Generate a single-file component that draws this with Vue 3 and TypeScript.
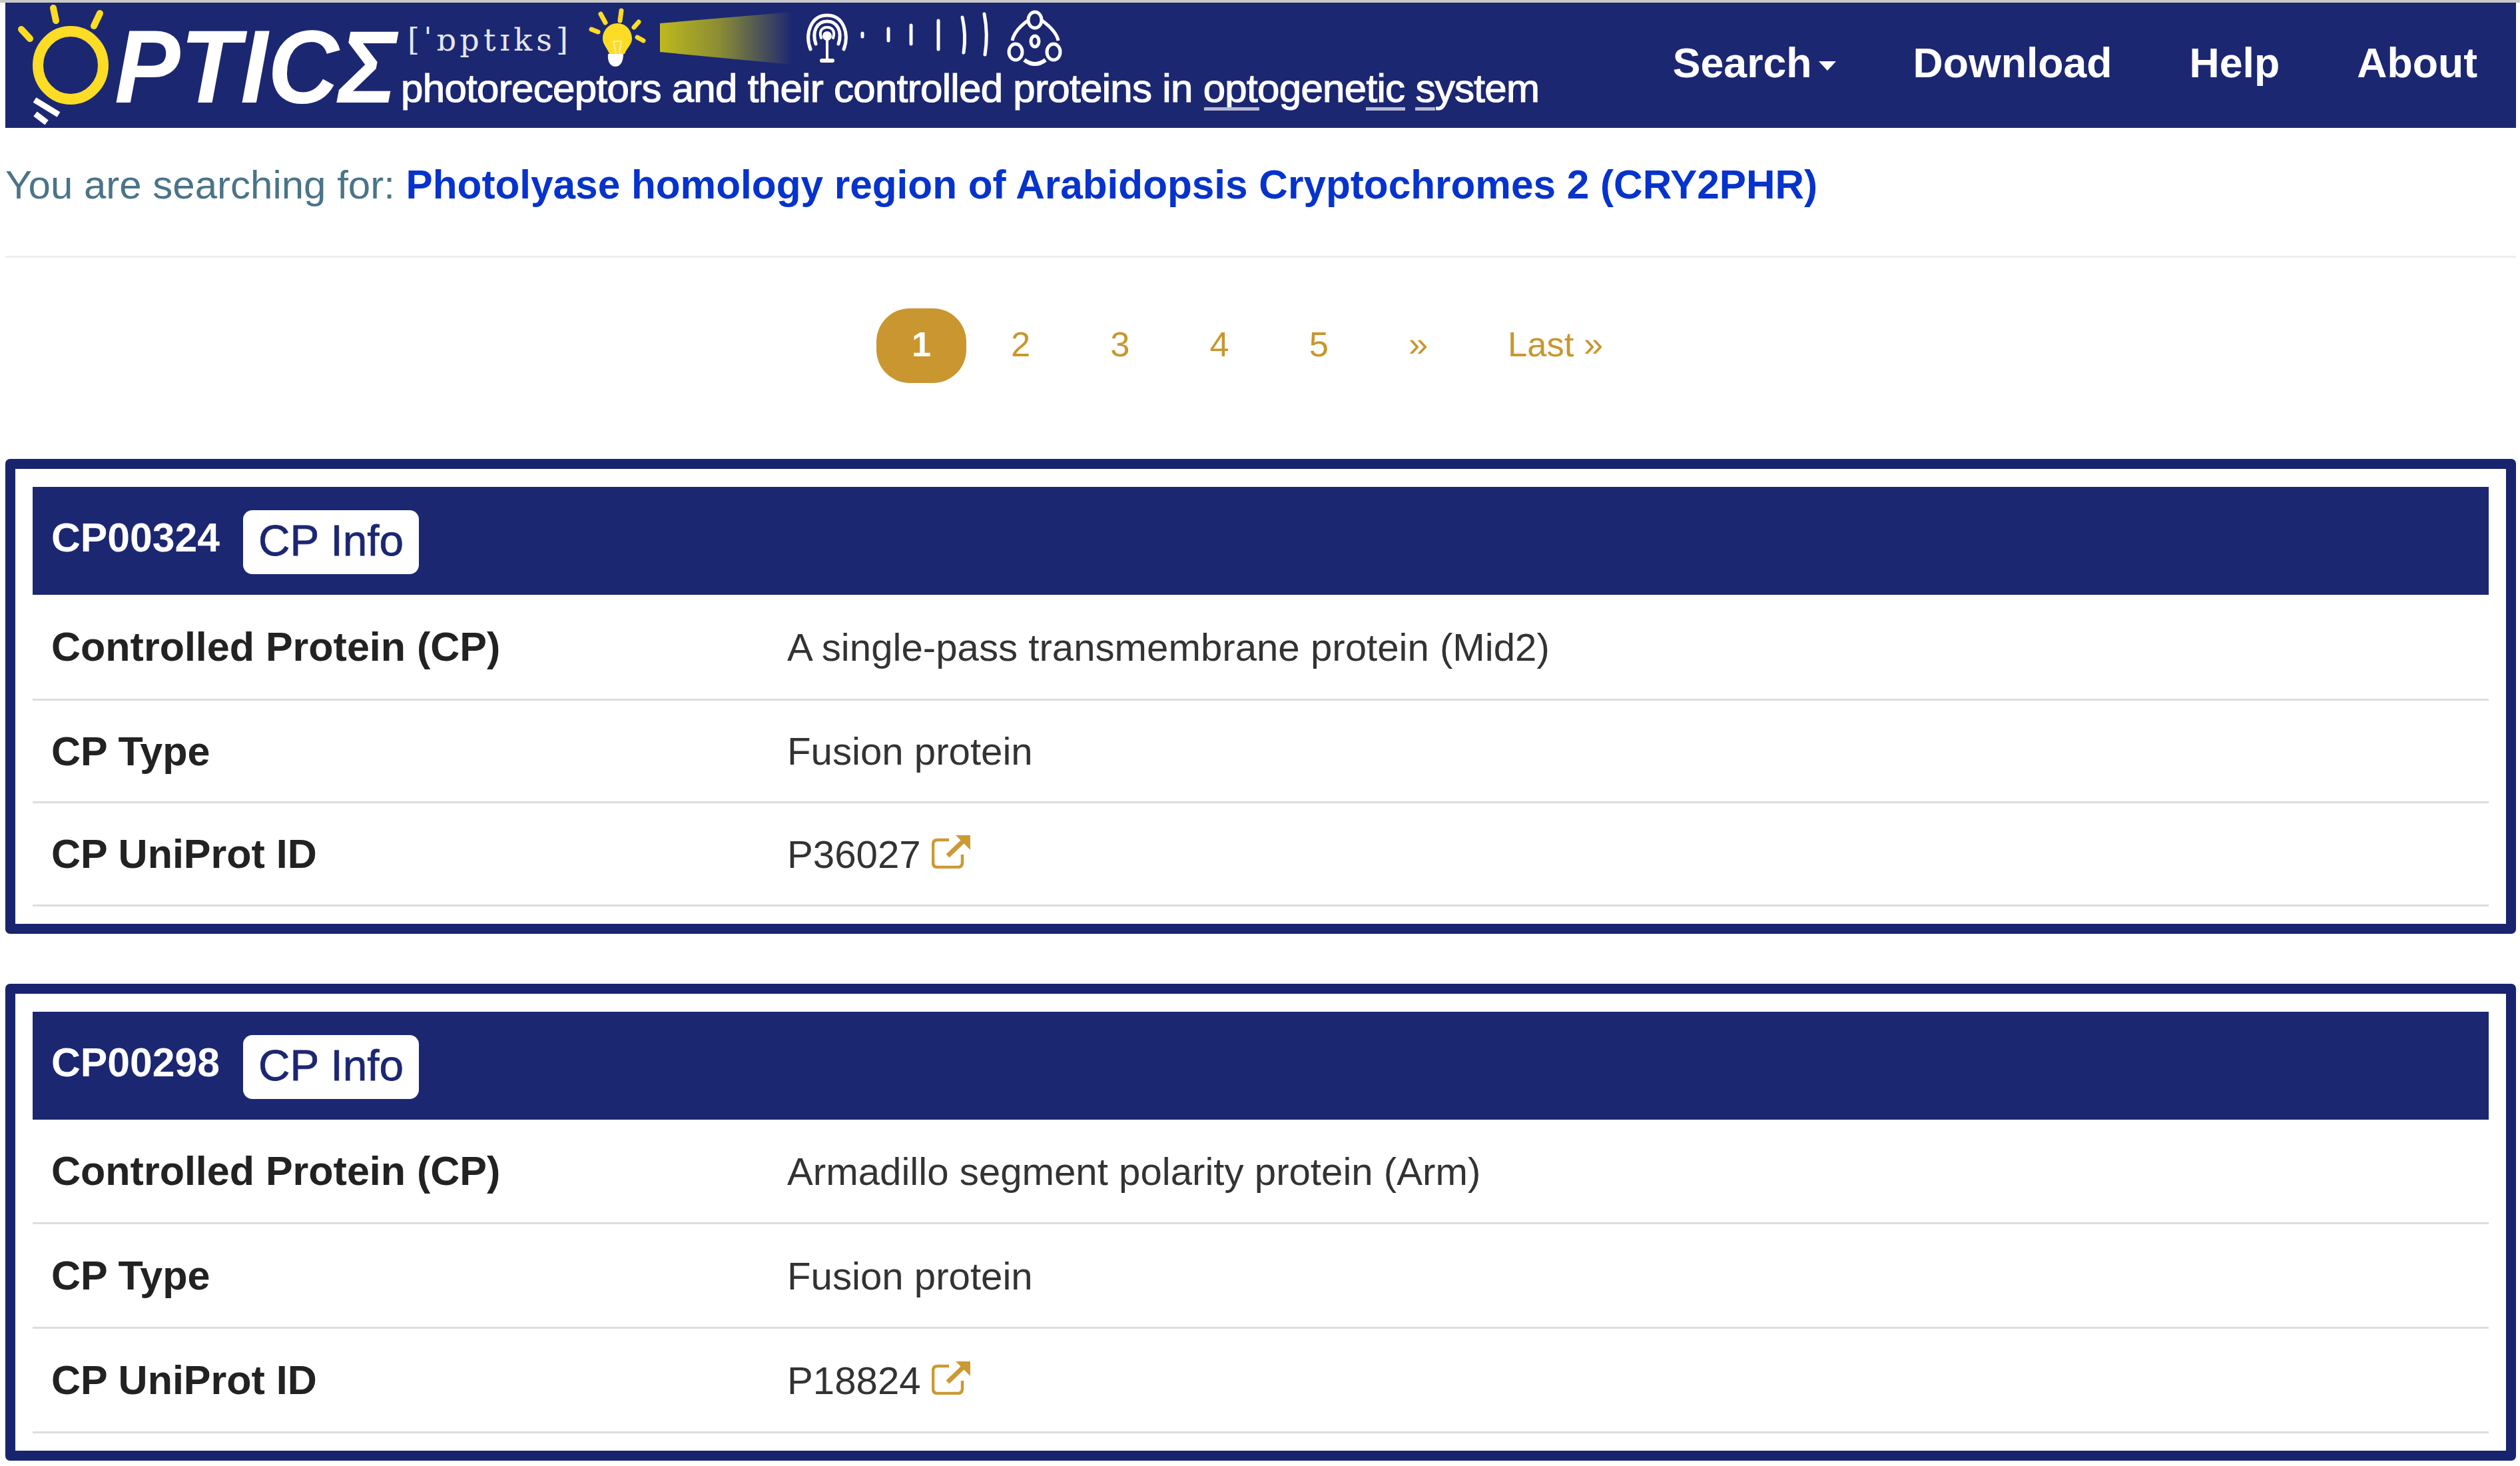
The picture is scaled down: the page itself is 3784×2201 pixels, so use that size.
<script setup lang="ts">
  interface Row {
    label: string
    value: string
    height: number
    link?: boolean
  }

  interface Card {
    id: string
    height: number
    rows: Row[]
  }

  const navItems = ['Download', 'Help', 'About']
  const pages = ['2', '3', '4', '5', '»', 'Last »']

  const cards: Card[] = [
    {
      id: 'CP00324',
      height: 713,
      rows: [
        { label: 'Controlled Protein (CP)', value: 'A single-pass transmembrane protein (Mid2)', height: 159 },
        { label: 'CP Type', value: 'Fusion protein', height: 154 },
        { label: 'CP UniProt ID', value: 'P36027', height: 155, link: true }
      ]
    },
    {
      id: 'CP00298',
      height: 716,
      rows: [
        { label: 'Controlled Protein (CP)', value: 'Armadillo segment polarity protein (Arm)', height: 157 },
        { label: 'CP Type', value: 'Fusion protein', height: 157 },
        { label: 'CP UniProt ID', value: 'P18824', height: 157, link: true }
      ]
    }
  ]
</script>

<template>
  <div class="page">
    <nav class="navbar">
      <svg class="logo" width="2340" height="188" viewBox="8 4 2340 188" role="img" aria-label="OPTICS logo">
        <defs>
          <linearGradient id="beam" x1="0" y1="0" x2="1" y2="0">
            <stop offset="0" stop-color="#bdb91c" />
            <stop offset="0.45" stop-color="#8b8c34" />
            <stop offset="1" stop-color="#1c2772" />
          </linearGradient>
        </defs>

        <!-- sun ring -->
        <ellipse cx="106" cy="98" rx="49" ry="51" fill="none" stroke="#fddc25" stroke-width="16" />
        <g stroke="#fddc25" stroke-width="10" stroke-linecap="round" fill="none">
          <path d="M80 12 L84 31" />
          <path d="M150 20 L141 39" />
          <path d="M32 44 L45 58" />
        </g>
        <g stroke="#fff" stroke-width="9" fill="none">
          <path d="M52 150 L88 172" />
          <path d="M53 171 L70 184" />
        </g>

        <text class="logo-word" x="172" y="154" textLength="424" lengthAdjust="spacingAndGlyphs">PTICΣ</text>
        <text class="logo-ipa" x="612" y="76" textLength="241">[ˈɒptɪks]</text>

        <!-- bulb -->
        <g stroke="#fddc25" stroke-width="7" stroke-linecap="round" fill="none">
          <path d="M902 21 L909 34" />
          <path d="M933 16 L931 31" />
          <path d="M959 33 L952 41" />
          <path d="M888 44 L898 48" />
          <path d="M957 56 L966 61" />
        </g>
        <path d="M927 35 C941 35 949 47 949 58 C949 67 941 72 938 81 L915 81 C912 72 905 67 905 58 C905 47 913 35 927 35 Z" fill="#fddc25" />
        <path d="M921 62 L925 80 M933 62 L930 80 M921 62 L933 62" stroke="#f6edb0" stroke-width="2" fill="none" />
        <path d="M913 81 L936 81 C936 90 933 100 924 100 C915 100 912 90 913 81 Z" fill="#fff" />

        <!-- light beam -->
        <polygon points="991,35 1190,18 1190,97 991,78" fill="url(#beam)" />

        <!-- antenna -->
        <g stroke="#fff" fill="none" stroke-linecap="round">
          <path d="M1217 74 C1208 50 1218 23 1242 23 C1266 23 1276 50 1267 74" stroke-width="5" />
          <path d="M1225 66 C1219 48 1226 32 1242 32 C1258 32 1265 48 1259 66" stroke-width="5" />
          <path d="M1233 57 C1230 48 1233 41 1242 41 C1251 41 1254 48 1251 57" stroke-width="4" />
          <path d="M1242 55 L1242 90" stroke-width="4" />
          <path d="M1234 91 L1250 91" stroke-width="6" />
          <path d="M1295 50 L1295 55" stroke-width="5" />
          <path d="M1334 43 L1334 61" stroke-width="5" />
          <path d="M1368 38 L1368 66" stroke-width="5" />
          <path d="M1409 31 L1409 74" stroke-width="5" />
          <path d="M1445 26 Q1451 52 1447 79" stroke-width="5" />
          <path d="M1478 21 Q1484 52 1479 82" stroke-width="5" />
        </g>
        <circle cx="1242" cy="54" r="7" fill="#fff" />

        <!-- molecule -->
        <g stroke="#fff" fill="none" stroke-width="5">
          <ellipse cx="1554" cy="30" rx="10" ry="12" />
          <ellipse cx="1525" cy="78" rx="10" ry="12" />
          <ellipse cx="1582" cy="78" rx="10" ry="12" />
          <ellipse cx="1554" cy="62" rx="6" ry="8" />
          <path d="M1543 31 C1531 40 1522 50 1520 61" />
          <path d="M1565 31 C1577 40 1587 50 1589 61" />
          <path d="M1538 90 Q1554 102 1570 90" stroke-width="6" />
        </g>

        <text class="logo-tag" x="602" y="153" textLength="1710">photoreceptors and their controlled proteins in optogenetic system</text>
        <g fill="#b5b9d4">
          <rect x="1808" y="161" width="83" height="5" />
          <rect x="2051" y="161" width="59" height="5" />
          <rect x="2125" y="161" width="30" height="5" />
        </g>
      </svg>

      <ul class="nav-links">
        <li class="nav-link">Search<span class="caret"></span></li>
        <li v-for="item in navItems" :key="item" class="nav-link">{{ item }}</li>
      </ul>
    </nav>

    <p class="search-line">
      You are searching for:
      <b>Photolyase homology region of Arabidopsis Cryptochromes 2 (CRY2PHR)</b>
    </p>
    <hr class="divider" />

    <ul class="pagination">
      <li class="page-item active">1</li>
      <li v-for="p in pages" :key="p" class="page-item">{{ p }}</li>
    </ul>

    <section v-for="card in cards" :key="card.id" class="card" :style="{ height: card.height + 'px' }">
      <header class="card-head">
        <span class="card-id">{{ card.id }}</span>
        <span class="info-pill">CP Info</span>
      </header>
      <div v-for="row in card.rows" :key="row.label" class="row" :style="{ height: row.height + 'px' }">
        <span class="row-label">{{ row.label }}</span>
        <span class="row-value">
          {{ row.value }}
          <svg v-if="row.link" class="ext-icon" width="60" height="50" viewBox="0 0 60 50">
            <path d="M26 7 L9 7 Q2 7 2 14 L2 41 Q2 48 9 48 L39 48 Q46 48 46 41 L46 29" fill="none" stroke="#cc9a33" stroke-width="4.5" />
            <path d="M24 31 L47 9" fill="none" stroke="#cc9a33" stroke-width="7" />
            <path d="M36 0 L58 0 L58 22 Z" fill="#cc9a33" />
          </svg>
        </span>
      </div>
    </section>
  </div>
</template>

<style>
  html, body {
    margin: 0;
    background: #fff;
  }
</style>

<style scoped>
  .page {
    width: 3784px;
    height: 2201px;
    overflow: hidden;
    box-sizing: border-box;
    padding: 4px 6px 0 8px;
    font-family: "Liberation Sans", Arial, sans-serif;
    color: #333;
    background: linear-gradient(#c8c8c8 4px, #fff 4px);
  }

  .navbar {
    display: flex;
    justify-content: space-between;
    align-items: flex-start;
    height: 188px;
    background: #1c2772;
  }

  .logo {
    display: block;
    flex: none;
  }

  .logo-word {
    font: italic bold 155px "Liberation Sans", sans-serif;
    fill: #fff;
  }

  .logo-ipa {
    font: 46px "DejaVu Serif", serif;
    fill: #e4e6f0;
  }

  .logo-tag {
    font: 60px "Liberation Sans", sans-serif;
    fill: #fff;
    stroke: #fff;
    stroke-width: 1.2px;
  }

  .nav-links {
    display: flex;
    list-style: none;
    margin: 0;
    padding: 0;
  }

  .nav-link {
    padding: 54px 58px 0;
    font-size: 62.6px;
    line-height: 72px;
    font-weight: bold;
    color: #fff;
  }

  .caret {
    display: inline-block;
    margin-left: 10px;
    vertical-align: middle;
    border-top: 14px solid #fff;
    border-left: 13px solid transparent;
    border-right: 13px solid transparent;
  }

  .search-line {
    margin: 0;
    padding-top: 50px;
    height: 141px;
    box-sizing: border-box;
    font-size: 60px;
    line-height: 70px;
    color: #4a7488;
  }

  .search-line b {
    font-size: 60.3px;
    color: #0633cc;
  }

  .divider {
    margin: 51px 0 0;
    border: 0;
    border-top: 3px solid #eee;
  }

  .pagination {
    display: flex;
    justify-content: center;
    gap: 14px;
    list-style: none;
    margin: 76px 0 0;
    padding: 0 10px 0 0;
  }

  .page-item {
    padding: 0 53px 4px;
    font-size: 52.5px;
    line-height: 108px;
    color: #c9962f;
    border-radius: 50px;
  }

  .page-item.active {
    background: #c9962f;
    color: #fff;
    font-weight: bold;
  }

  .card {
    box-sizing: border-box;
    margin-top: 75px;
    padding: 27px 26px 0;
    border: 15px solid #19246f;
    border-radius: 7px;
  }

  .card:first-of-type {
    margin-top: 114px;
  }

  .card-head {
    display: flex;
    align-items: center;
    gap: 35px;
    height: 162px;
    padding-left: 28px;
    background: #1c2772;
  }

  .card-id {
    font-size: 60.7px;
    font-weight: bold;
    color: #fff;
    position: relative;
    top: -5px;
  }

  .info-pill {
    display: flex;
    align-items: center;
    justify-content: center;
    box-sizing: border-box;
    width: 264px;
    height: 96px;
    margin-top: 4px;
    padding-bottom: 6px;
    border-radius: 14px;
    background: #fff;
    font-size: 65.7px;
    color: #1c2772;
    -webkit-text-stroke: 0.8px #1c2772;
  }

  .row {
    display: grid;
    grid-template-columns: 1105px 1fr;
    align-items: center;
    box-sizing: border-box;
    padding-left: 28px;
    border-bottom: 3px solid #ddd;
  }

  .row-label {
    font-size: 61px;
    font-weight: bold;
    color: #222;
  }

  .row-value {
    font-size: 58.2px;
    color: #333;
  }

  .ext-icon {
    vertical-align: -1px;
  }
</style>
